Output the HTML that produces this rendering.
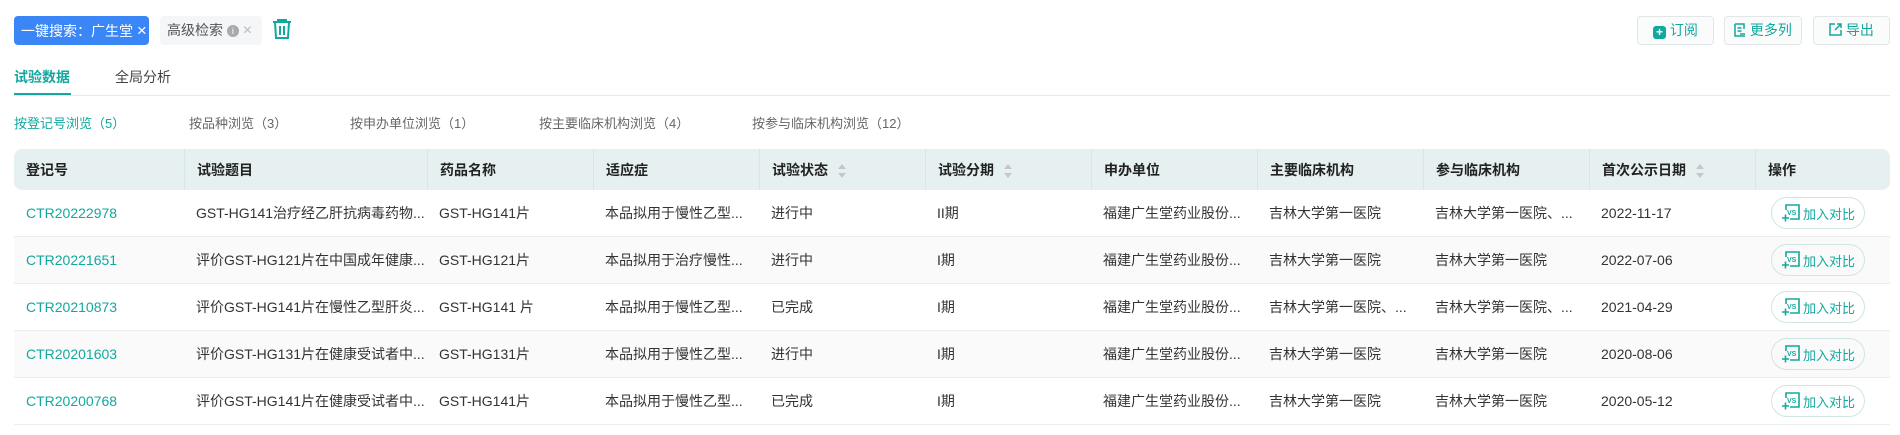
<!DOCTYPE html>
<html><head><meta charset="utf-8"><style>
*{box-sizing:border-box;margin:0;padding:0}
body{width:1900px;height:435px;background:#fff;font-family:"Liberation Sans","Noto Sans CJK SC",sans-serif;color:#333;position:relative;overflow:hidden;font-size:14px}
.abs{position:absolute}
.tag1{left:14px;top:16px;width:135px;height:29px;background:#3a86f7;border-radius:4px;color:#fff;font-size:14px;line-height:29px;padding-left:7px}
.tag2{left:160px;top:16px;width:102px;height:29px;background:#f5f6f7;border-radius:4px;color:#555;font-size:14px;line-height:29px;padding-left:7px}
.btn{top:16px;height:29px;border:1px solid #e3e6e8;border-radius:4px;background:#fafbfb;color:#13a89e;font-size:14px;line-height:27px;text-align:center}
.tab{top:67px;font-size:14px}
.sub{top:113px;font-size:13px;color:#666}
table{position:absolute;left:14px;top:149px;width:1876px;border-collapse:separate;border-spacing:0;font-size:14px}
th{background:#e6f0f0;height:41px;text-align:left;font-weight:bold;color:#222;padding-left:12px;border-left:1px solid #d8e6e6}
th:first-child{border-left:none;border-radius:8px 0 0 8px}
th:last-child{border-radius:0 8px 8px 0}
td{height:47px;padding-left:12px;border-bottom:1px solid #ebeef0;white-space:nowrap;color:#333}
tr.alt td{background:#fafafa}
td.id{color:#13a89e}
.sort{display:inline-block;vertical-align:middle;margin-left:10px;width:8px;height:14px;position:relative}
.sort:before{content:"";position:absolute;top:0;left:0;border:4px solid transparent;border-bottom:5px solid #c4c8cc;border-top:none}
.sort:after{content:"";position:absolute;bottom:0;left:0;border:4px solid transparent;border-top:5px solid #c4c8cc;border-bottom:none}
.cmp{display:inline-flex;align-items:center;justify-content:center;width:94px;height:32px;border:1px solid #cfe6e2;border-radius:16px;color:#13a89e;font-size:13px;gap:2px;margin-left:4px}
</style></head><body>
<div class="abs tag1">一键搜索：广生堂 <span style="font-size:17px">×</span></div>
<div class="abs tag2">高级检索 <span style="display:inline-block;width:12px;height:12px;border-radius:6px;background:#aaa;color:#fff;font-size:9px;line-height:12px;text-align:center;vertical-align:middle">i</span> <span style="color:#bbb;font-size:16px">×</span></div>
<svg class="abs" style="left:272px;top:18px" width="20" height="22" viewBox="0 0 20 22" fill="none" stroke="#13a89e" stroke-width="2"><path d="M1 4h18M6 4V2h8v2M3 4l1 16h12l1-16M8 8v9M12 8v9"/></svg>
<div class="abs btn" style="left:1637px;width:77px"><span style="display:inline-block;width:13px;height:13px;background:#13a89e;border-radius:3px;color:#fff;font-size:12px;line-height:13px;vertical-align:-1px;font-weight:bold">+</span> 订阅</div>
<div class="abs btn" style="left:1724px;width:78px"><svg width="12" height="14" viewBox="0 0 12 14" fill="none" stroke="#13a89e" stroke-width="1.5" style="vertical-align:-2px"><path d="M1 1h9v5M1 1v12h10M3.5 5h4M3.5 8h4M6 11h5"/></svg> 更多列</div>
<div class="abs btn" style="left:1813px;width:77px"><svg width="13" height="13" viewBox="0 0 13 13" fill="none" stroke="#13a89e" stroke-width="1.5" style="vertical-align:-1px"><path d="M6 1H1v11h11V7M8 1h4v4M12 1L6 7"/></svg> 导出</div>
<div class="abs tab" style="left:14px;color:#13a89e;font-weight:bold">试验数据</div>
<div class="abs" style="left:14px;top:93px;width:57px;height:3px;background:#13a89e"></div>
<div class="abs tab" style="left:115px;color:#444">全局分析</div>
<div class="abs" style="left:14px;top:95px;width:1876px;height:1px;background:#e6e8ea"></div>
<div class="abs sub" style="left:14px;color:#13a89e">按登记号浏览（5）</div>
<div class="abs sub" style="left:189px">按品种浏览（3）</div>
<div class="abs sub" style="left:350px">按申办单位浏览（1）</div>
<div class="abs sub" style="left:539px">按主要临床机构浏览（4）</div>
<div class="abs sub" style="left:752px">按参与临床机构浏览（12）</div>
<table>
<colgroup><col style="width:170px"><col style="width:243px"><col style="width:166px"><col style="width:166px"><col style="width:166px"><col style="width:166px"><col style="width:166px"><col style="width:166px"><col style="width:166px"><col style="width:166px"><col style="width:135px"></colgroup>
<tr><th>登记号</th><th>试验题目</th><th>药品名称</th><th>适应症</th><th>试验状态<span class="sort"></span></th><th>试验分期<span class="sort"></span></th><th>申办单位</th><th>主要临床机构</th><th>参与临床机构</th><th>首次公示日期<span class="sort"></span></th><th>操作</th></tr>
<tr><td class="id">CTR20222978</td><td>GST-HG141治疗经乙肝抗病毒药物...</td><td>GST-HG141片</td><td>本品拟用于慢性乙型...</td><td>进行中</td><td>II期</td><td>福建广生堂药业股份...</td><td>吉林大学第一医院</td><td>吉林大学第一医院、...</td><td>2022-11-17</td><td><span class="cmp"><svg width="20" height="20" viewBox="0 0 20 20" fill="none" stroke="#13a89e" stroke-width="1.6"><path d="M5 7V2h13v14H9"/><path d="M1 15h7M4.5 11.5v7"/><text x="6" y="12" font-size="7" font-weight="bold" fill="#13a89e" stroke="none" font-family="Liberation Sans">VS</text></svg>加入对比</span></td></tr>
<tr class="alt"><td class="id">CTR20221651</td><td>评价GST-HG121片在中国成年健康...</td><td>GST-HG121片</td><td>本品拟用于治疗慢性...</td><td>进行中</td><td>I期</td><td>福建广生堂药业股份...</td><td>吉林大学第一医院</td><td>吉林大学第一医院</td><td>2022-07-06</td><td><span class="cmp"><svg width="20" height="20" viewBox="0 0 20 20" fill="none" stroke="#13a89e" stroke-width="1.6"><path d="M5 7V2h13v14H9"/><path d="M1 15h7M4.5 11.5v7"/><text x="6" y="12" font-size="7" font-weight="bold" fill="#13a89e" stroke="none" font-family="Liberation Sans">VS</text></svg>加入对比</span></td></tr>
<tr><td class="id">CTR20210873</td><td>评价GST-HG141片在慢性乙型肝炎...</td><td>GST-HG141 片</td><td>本品拟用于慢性乙型...</td><td>已完成</td><td>I期</td><td>福建广生堂药业股份...</td><td>吉林大学第一医院、...</td><td>吉林大学第一医院、...</td><td>2021-04-29</td><td><span class="cmp"><svg width="20" height="20" viewBox="0 0 20 20" fill="none" stroke="#13a89e" stroke-width="1.6"><path d="M5 7V2h13v14H9"/><path d="M1 15h7M4.5 11.5v7"/><text x="6" y="12" font-size="7" font-weight="bold" fill="#13a89e" stroke="none" font-family="Liberation Sans">VS</text></svg>加入对比</span></td></tr>
<tr class="alt"><td class="id">CTR20201603</td><td>评价GST-HG131片在健康受试者中...</td><td>GST-HG131片</td><td>本品拟用于慢性乙型...</td><td>进行中</td><td>I期</td><td>福建广生堂药业股份...</td><td>吉林大学第一医院</td><td>吉林大学第一医院</td><td>2020-08-06</td><td><span class="cmp"><svg width="20" height="20" viewBox="0 0 20 20" fill="none" stroke="#13a89e" stroke-width="1.6"><path d="M5 7V2h13v14H9"/><path d="M1 15h7M4.5 11.5v7"/><text x="6" y="12" font-size="7" font-weight="bold" fill="#13a89e" stroke="none" font-family="Liberation Sans">VS</text></svg>加入对比</span></td></tr>
<tr><td class="id">CTR20200768</td><td>评价GST-HG141片在健康受试者中...</td><td>GST-HG141片</td><td>本品拟用于慢性乙型...</td><td>已完成</td><td>I期</td><td>福建广生堂药业股份...</td><td>吉林大学第一医院</td><td>吉林大学第一医院</td><td>2020-05-12</td><td><span class="cmp"><svg width="20" height="20" viewBox="0 0 20 20" fill="none" stroke="#13a89e" stroke-width="1.6"><path d="M5 7V2h13v14H9"/><path d="M1 15h7M4.5 11.5v7"/><text x="6" y="12" font-size="7" font-weight="bold" fill="#13a89e" stroke="none" font-family="Liberation Sans">VS</text></svg>加入对比</span></td></tr>
</table>
</body></html>
